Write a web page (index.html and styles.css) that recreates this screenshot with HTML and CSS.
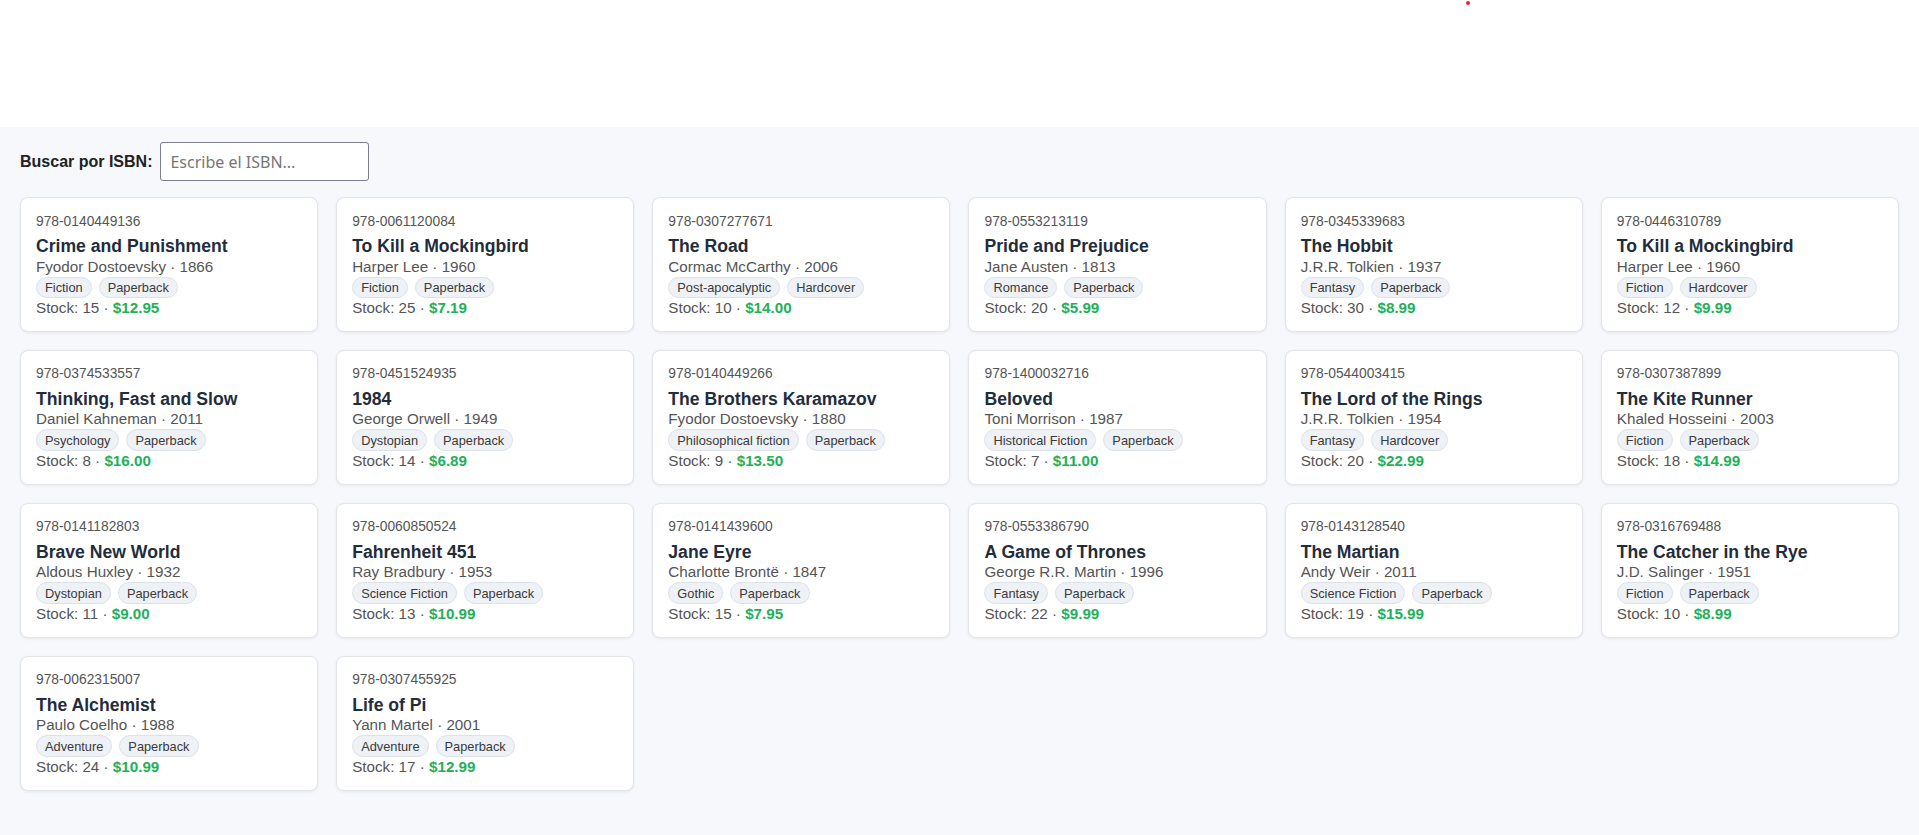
FILE: index.html
```html
<!DOCTYPE html>
<html lang="es">
<head>
<meta charset="utf-8">
<title>Libros</title>
<link rel="stylesheet" href="styles.css">
</head>
<body>
<header class="top"><span class="dot"></span></header>
<main class="main">
  <div class="search">
    <label class="search-label" for="isbn">Buscar por ISBN:</label>
    <input class="search-input" id="isbn" type="text" placeholder="Escribe el ISBN...">
  </div>
  <div class="grid">
    <div class="card"><div class="isbn">978-0140449136</div><div class="title">Crime and Punishment</div><div class="meta">Fyodor Dostoevsky · 1866</div><div class="tags"><span class="tag">Fiction</span><span class="tag">Paperback</span></div><div class="stock">Stock: 15 · <span class="price">$12.95</span></div></div>
    <div class="card"><div class="isbn">978-0061120084</div><div class="title">To Kill a Mockingbird</div><div class="meta">Harper Lee · 1960</div><div class="tags"><span class="tag">Fiction</span><span class="tag">Paperback</span></div><div class="stock">Stock: 25 · <span class="price">$7.19</span></div></div>
    <div class="card"><div class="isbn">978-0307277671</div><div class="title">The Road</div><div class="meta">Cormac McCarthy · 2006</div><div class="tags"><span class="tag">Post-apocalyptic</span><span class="tag">Hardcover</span></div><div class="stock">Stock: 10 · <span class="price">$14.00</span></div></div>
    <div class="card"><div class="isbn">978-0553213119</div><div class="title">Pride and Prejudice</div><div class="meta">Jane Austen · 1813</div><div class="tags"><span class="tag">Romance</span><span class="tag">Paperback</span></div><div class="stock">Stock: 20 · <span class="price">$5.99</span></div></div>
    <div class="card"><div class="isbn">978-0345339683</div><div class="title">The Hobbit</div><div class="meta">J.R.R. Tolkien · 1937</div><div class="tags"><span class="tag">Fantasy</span><span class="tag">Paperback</span></div><div class="stock">Stock: 30 · <span class="price">$8.99</span></div></div>
    <div class="card"><div class="isbn">978-0446310789</div><div class="title">To Kill a Mockingbird</div><div class="meta">Harper Lee · 1960</div><div class="tags"><span class="tag">Fiction</span><span class="tag">Hardcover</span></div><div class="stock">Stock: 12 · <span class="price">$9.99</span></div></div>

    <div class="card"><div class="isbn">978-0374533557</div><div class="title">Thinking, Fast and Slow</div><div class="meta">Daniel Kahneman · 2011</div><div class="tags"><span class="tag">Psychology</span><span class="tag">Paperback</span></div><div class="stock">Stock: 8 · <span class="price">$16.00</span></div></div>
    <div class="card"><div class="isbn">978-0451524935</div><div class="title">1984</div><div class="meta">George Orwell · 1949</div><div class="tags"><span class="tag">Dystopian</span><span class="tag">Paperback</span></div><div class="stock">Stock: 14 · <span class="price">$6.89</span></div></div>
    <div class="card"><div class="isbn">978-0140449266</div><div class="title">The Brothers Karamazov</div><div class="meta">Fyodor Dostoevsky · 1880</div><div class="tags"><span class="tag">Philosophical fiction</span><span class="tag">Paperback</span></div><div class="stock">Stock: 9 · <span class="price">$13.50</span></div></div>
    <div class="card"><div class="isbn">978-1400032716</div><div class="title">Beloved</div><div class="meta">Toni Morrison · 1987</div><div class="tags"><span class="tag">Historical Fiction</span><span class="tag">Paperback</span></div><div class="stock">Stock: 7 · <span class="price">$11.00</span></div></div>
    <div class="card"><div class="isbn">978-0544003415</div><div class="title">The Lord of the Rings</div><div class="meta">J.R.R. Tolkien · 1954</div><div class="tags"><span class="tag">Fantasy</span><span class="tag">Hardcover</span></div><div class="stock">Stock: 20 · <span class="price">$22.99</span></div></div>
    <div class="card"><div class="isbn">978-0307387899</div><div class="title">The Kite Runner</div><div class="meta">Khaled Hosseini · 2003</div><div class="tags"><span class="tag">Fiction</span><span class="tag">Paperback</span></div><div class="stock">Stock: 18 · <span class="price">$14.99</span></div></div>

    <div class="card"><div class="isbn">978-0141182803</div><div class="title">Brave New World</div><div class="meta">Aldous Huxley · 1932</div><div class="tags"><span class="tag">Dystopian</span><span class="tag">Paperback</span></div><div class="stock">Stock: 11 · <span class="price">$9.00</span></div></div>
    <div class="card"><div class="isbn">978-0060850524</div><div class="title">Fahrenheit 451</div><div class="meta">Ray Bradbury · 1953</div><div class="tags"><span class="tag">Science Fiction</span><span class="tag">Paperback</span></div><div class="stock">Stock: 13 · <span class="price">$10.99</span></div></div>
    <div class="card"><div class="isbn">978-0141439600</div><div class="title">Jane Eyre</div><div class="meta">Charlotte Brontë · 1847</div><div class="tags"><span class="tag">Gothic</span><span class="tag">Paperback</span></div><div class="stock">Stock: 15 · <span class="price">$7.95</span></div></div>
    <div class="card"><div class="isbn">978-0553386790</div><div class="title">A Game of Thrones</div><div class="meta">George R.R. Martin · 1996</div><div class="tags"><span class="tag">Fantasy</span><span class="tag">Paperback</span></div><div class="stock">Stock: 22 · <span class="price">$9.99</span></div></div>
    <div class="card"><div class="isbn">978-0143128540</div><div class="title">The Martian</div><div class="meta">Andy Weir · 2011</div><div class="tags"><span class="tag">Science Fiction</span><span class="tag">Paperback</span></div><div class="stock">Stock: 19 · <span class="price">$15.99</span></div></div>
    <div class="card"><div class="isbn">978-0316769488</div><div class="title">The Catcher in the Rye</div><div class="meta">J.D. Salinger · 1951</div><div class="tags"><span class="tag">Fiction</span><span class="tag">Paperback</span></div><div class="stock">Stock: 10 · <span class="price">$8.99</span></div></div>

    <div class="card"><div class="isbn">978-0062315007</div><div class="title">The Alchemist</div><div class="meta">Paulo Coelho · 1988</div><div class="tags"><span class="tag">Adventure</span><span class="tag">Paperback</span></div><div class="stock">Stock: 24 · <span class="price">$10.99</span></div></div>
    <div class="card"><div class="isbn">978-0307455925</div><div class="title">Life of Pi</div><div class="meta">Yann Martel · 2001</div><div class="tags"><span class="tag">Adventure</span><span class="tag">Paperback</span></div><div class="stock">Stock: 17 · <span class="price">$12.99</span></div></div>
  </div>
</main>
</body>
</html>
```

FILE: styles.css
```css
html, body {
  margin: 0;
  padding: 0;
}
body {
  font-family: "Liberation Sans", Arial, sans-serif;
  background: #f7f8fb;
  color: #333;
  min-height: 835px;
}
.top {
  position: relative;
  height: 127px;
  background: #ffffff;
}
.dot {
  position: absolute;
  left: 1466px;
  top: 1px;
  width: 4px;
  height: 4px;
  border-radius: 50%;
  background: #e32626;
}
.main {
  padding: 15px 20px 20px;
}
.search {
  display: flex;
  align-items: center;
  gap: 8px;
  margin-bottom: 16px;
}
.search-label {
  font-weight: bold;
  font-size: 16px;
  color: #222;
}
.search-input {
  width: 209px;
  height: 39px;
  box-sizing: border-box;
  padding: 0 9px;
  border: 1px solid #7d7d8c;
  border-radius: 3px;
  background: #fff;
  font-family: "Noto Sans", "Open Sans", sans-serif;
  font-size: 16px;
  color: #333;
}
.search-input::placeholder {
  color: #767676;
}
.grid {
  display: grid;
  grid-template-columns: repeat(6, 1fr);
  gap: 18px;
}
.card {
  background: #fff;
  border: 1px solid #e2e5ea;
  border-radius: 8px;
  box-shadow: 0 1px 3px rgba(20, 30, 50, 0.07);
  padding: 15.5px 15px 15.2px;
}
.isbn {
  font-size: 13.8px;
  color: #555;
  margin-bottom: 7.5px;
}
.title {
  font-size: 17.6px;
  font-weight: bold;
  color: #1f2d3d;
  margin-bottom: 0.5px;
}
.meta {
  font-size: 15.2px;
  color: #555;
}
.tags {
  display: flex;
  gap: 7px;
  margin-top: 2px;
}
.tag {
  font-size: 12.8px;
  color: #3a3a3a;
  background: #eef1f5;
  border: 1px solid #dde2e8;
  border-radius: 999px;
  padding: 2.4px 8px;
}
.stock {
  font-size: 15.2px;
  color: #555;
  margin-top: 0.5px;
}
.price {
  color: #22b05a;
  font-weight: bold;
}
```
